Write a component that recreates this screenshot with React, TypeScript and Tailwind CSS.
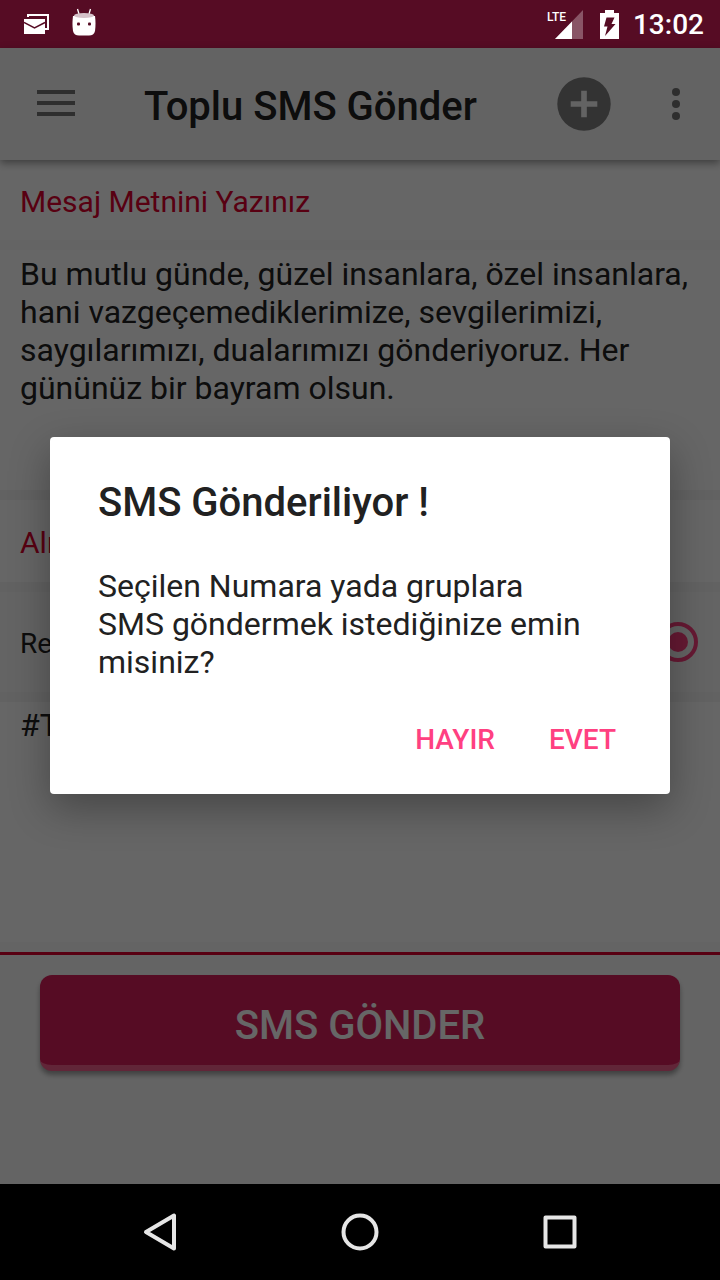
import React from "react";

function MailIcon() {
  return (
    <svg width="26" height="22" viewBox="0 0 26 22" aria-hidden="true">
      <path d="M4 4V2h20v14h-3" fill="none" stroke="#fff" strokeWidth="2" />
      <path d="M0 6h21v15H0z" fill="#fff" />
      <path d="M0 9.500l10.500 5.500L21 9.500" fill="none" stroke="#560c24" strokeWidth="1.500" />
    </svg>
  );
}

function DroidIcon() {
  return (
    <svg width="24" height="28" viewBox="0 0 24 28" aria-hidden="true">
      <path d="M5.500 1l1.500 5M18.500 1L17 6" stroke="#fff" strokeWidth="1.300" />
      <path d="M1 8C0.300 13 0.300 18 1 23c0.500 3 3 4.500 6 4.500h10c3 0 5.500-1.500 6-4.500c0.700-5 0.700-10 0-15z" fill="#fff" />
      <ellipse cx="12" cy="7.500" rx="10" ry="2.600" fill="#d5c2c9" />
      <rect x="5" y="14.500" width="3" height="3" rx="1" fill="#560c24" />
      <rect x="16" y="14.500" width="3" height="3" rx="1" fill="#560c24" />
    </svg>
  );
}

function StatusBar() {
  return (
    <header className="flex h-12 items-center bg-[#560c24] pl-6 pr-4 text-white">
      <MailIcon />
      <span className="-mt-1 ml-[22px]">
        <DroidIcon />
      </span>
      <span className="ml-auto flex items-center">
        <span className="relative block">
          <span className="absolute -left-2 -top-px text-[12px] font-medium leading-4">LTE</span>
          <svg width="28" height="29" viewBox="0 0 28 29" aria-hidden="true">
            <path d="M28 0v29H0z" fill="#fff" fillOpacity="0.3" />
            <path d="M17 11.400V29H0z" fill="#fff" />
          </svg>
        </span>
        <svg className="ml-[17px]" width="19" height="29" viewBox="0 0 19 29" aria-hidden="true">
          <path d="M5 0h9v3h5v26H0V3h5z" fill="#fff" />
          <path d="M6.500 7.500h8L11.500 14h4L5 26l2.500-9.500H4z" fill="#560c24" />
        </svg>
        <time className="ml-[14px] pt-0.5 text-[28px] font-medium leading-9">13:02</time>
      </span>
    </header>
  );
}

function Toolbar() {
  return (
    <div className="relative flex h-28 items-center bg-[#f8f8f8] pl-[37px] pr-10 shadow-[0_3px_8px_rgba(0,0,0,0.4)]">
      <button type="button" aria-label="Menü">
        <svg className="block" width="38" height="28" viewBox="0 0 38 28" fill="#737373">
          <path d="M0 0h38v4H0zM0 11h38v4H0zM0 22h38v4H0z" />
        </svg>
      </button>
      <h1 className="ml-[69px] mt-1 text-[40px] font-medium leading-[47px] text-[#212121]">Toplu SMS Gönder</h1>
      <button type="button" aria-label="Ekle" className="ml-auto">
        <svg className="block" width="54" height="54" viewBox="0 0 54 54">
          <circle cx="27" cy="27" r="26.700" fill="#808080" />
          <path d="M24.200 13.700h5.600v10.500h10.500v5.600H29.800v10.500h-5.600V29.800H13.700v-5.600h10.500z" fill="#f8f8f8" />
        </svg>
      </button>
      <button type="button" aria-label="Diğer seçenekler" className="ml-[61px]">
        <svg className="block" width="8" height="32" viewBox="0 0 8 32" fill="#737373">
          <circle cx="4" cy="4" r="4" />
          <circle cx="4" cy="16" r="4" />
          <circle cx="4" cy="28" r="4" />
        </svg>
      </button>
    </div>
  );
}

function ConfirmDialog() {
  return (
    <div className="absolute inset-0 grid place-items-center bg-black/60 px-[50px] pb-[2px]">
      <section
        role="alertdialog"
        aria-labelledby="dialog-title"
        aria-describedby="dialog-text"
        className="w-full rounded-sm bg-white px-12 pb-[18px] pt-[42px] text-[#212121] shadow-[0_14px_40px_rgba(0,0,0,0.32)]"
      >
        <h2 id="dialog-title" className="text-[40px] font-medium leading-[47px]">SMS Gönderiliyor !</h2>
        <p id="dialog-text" className="mt-[41px] text-[32px] leading-[38px]">
          Seçilen Numara yada gruplara
          <br />
          SMS göndermek istediğinize emin misiniz?
        </p>
        <div className="mt-[23px] flex justify-end gap-[54px] pr-[6px] text-[28px] font-medium text-[#ff4081]">
          <button type="button" className="h-[72px]">HAYIR</button>
          <button type="button" className="h-[72px]">EVET</button>
        </div>
      </section>
    </div>
  );
}

function NavigationBar() {
  return (
    <nav className="flex h-24 items-center justify-center gap-40 bg-black">
      <button type="button" aria-label="Geri">
        <svg className="block" width="40" height="40" viewBox="0 0 40 40" fill="none" stroke="#e6e6e6" strokeWidth="4" strokeLinejoin="round">
          <path d="M34 3.500v33L6 20z" />
        </svg>
      </button>
      <button type="button" aria-label="Ana ekran">
        <svg className="block" width="40" height="40" viewBox="0 0 40 40" fill="none" stroke="#e6e6e6" strokeWidth="4">
          <circle cx="20" cy="20" r="16.500" />
        </svg>
      </button>
      <button type="button" aria-label="Son uygulamalar">
        <svg className="block" width="40" height="40" viewBox="0 0 40 40" fill="none" stroke="#e6e6e6" strokeWidth="4" strokeLinejoin="round">
          <path d="M5.500 5.500h29v29h-29z" />
        </svg>
      </button>
    </nav>
  );
}

export default function App() {
  return (
    <div className="flex min-h-screen flex-col font-['Roboto',sans-serif]">
      <StatusBar />
      <main className="relative flex flex-1 flex-col bg-[#fafafa]">
        <Toolbar />
        <label htmlFor="message" className="flex h-20 items-center bg-white px-5 pb-px pt-1 text-[30px] text-[#dc002d]">
          Mesaj Metnini Yazınız
        </label>
        <textarea
          id="message"
          className="mt-[10px] block h-60 w-full resize-none bg-white px-5 pt-[5px] text-[32px] leading-[38px] text-[#212121] outline-none"
          defaultValue="Bu mutlu günde, güzel insanlara, özel insanlara, hani vazgeçemediklerimize, sevgilerimizi, saygılarımızı, dualarımızı gönderiyoruz. Her gününüz bir bayram olsun."
        />
        <div className="h-[10px] bg-[#f5f5f5]" />
        <label htmlFor="recipients" className="flex h-[82px] items-center bg-white px-5 pt-[2px] text-[30px] text-[#dc002d]">
          Alıcılar
        </label>
        <div className="h-[10px] bg-[#f5f5f5]" />
        <label className="flex h-[100px] items-center justify-between bg-[#fafafa] pl-5 pr-[22px] text-[28px] text-[#212121]">
          <span className="pt-1">Rehber</span>
          <input
            type="radio"
            name="source"
            defaultChecked
            className="grid size-10 appearance-none place-items-center rounded-full border-4 border-[#ff4081] before:size-5 before:rounded-full before:bg-[#ff4081]"
          />
        </label>
        <div className="h-[10px] bg-[#f5f5f5]" />
        <textarea
          id="recipients"
          className="block w-full flex-1 resize-none bg-white px-5 pt-1 text-[32px] leading-[38px] text-[#212121] outline-none"
          defaultValue="#Tümü"
        />
        <div className="mt-[10px] h-[232px] border-t-[3px] border-[#dc002d] px-10 pt-5">
          <button
            type="button"
            className="block h-24 w-full rounded-xl border-b-[6px] border-[#f25f8c] bg-[#d71e5a] pt-[10px] text-[40px] font-medium leading-[47px] text-white shadow-[0_4px_5px_rgba(0,0,0,0.35)]"
          >
            SMS GÖNDER
          </button>
        </div>
        <ConfirmDialog />
      </main>
      <NavigationBar />
    </div>
  );
}
